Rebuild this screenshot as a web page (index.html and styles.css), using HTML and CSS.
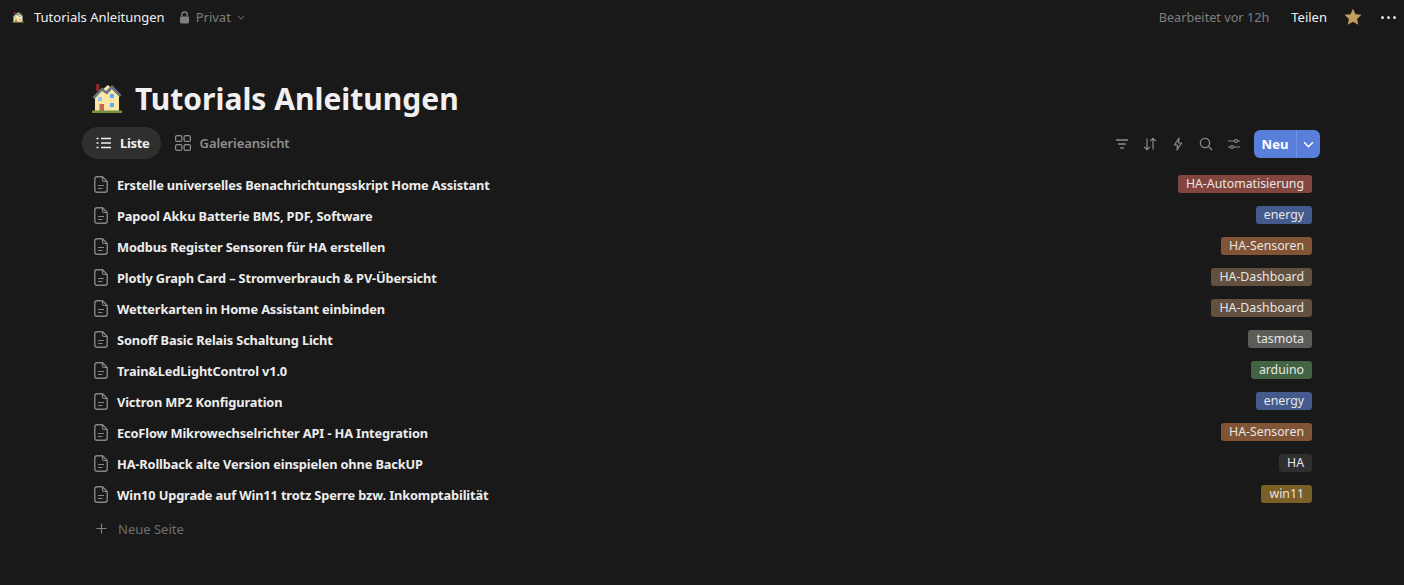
FILE: index.html
```html
<!DOCTYPE html>
<html lang="de">
<head>
  <meta charset="UTF-8">
  <meta name="viewport" content="width=device-width, initial-scale=1.0">
  <title>Tutorials Anleitungen</title>
  <link rel="stylesheet" href="styles.css">
</head>
<body>
  <svg width="0" height="0" class="defs">
    <symbol id="house" viewBox="0 0 32 32">
      <rect x="5" y="2" width="3.5" height="7" fill="#8a2a2a"/>
      <path d="M4 14 L17 3 L28 14 V29 H4 Z" fill="#fbe6a8"/>
      <path d="M1.5 15 L11 5.5 L15 9 L21 3 L30.5 13 L28.5 15 L21 7 L16 12.5 L11 9 L3.5 17 Z" fill="#66757f"/>
      <rect x="8.5" y="22" width="4.5" height="7.5" fill="#c1694f"/>
      <rect x="7" y="15" width="4" height="4" fill="#88c9f9"/>
      <rect x="19" y="12" width="4" height="4" fill="#55acee"/>
      <rect x="19" y="21" width="4" height="4" fill="#55acee"/>
      <rect x="1" y="28.5" width="30" height="2.5" fill="#77923c"/>
    </symbol>
    <symbol id="doc" viewBox="0 0 14 17">
      <path d="M3 .8h5.500L13.200 5.500V14a2.200 2.200 0 0 1-2.200 2.200H3A2.200 2.200 0 0 1 .8 14V3A2.200 2.200 0 0 1 3 .8z" fill="none" stroke="currentColor" stroke-width="1.400"/>
      <path d="M8.500 1v3A1.500 1.500 0 0 0 10 5.500h3M4 9.500h6M4 12.500h4.500" fill="none" stroke="currentColor" stroke-width="1.200"/>
    </symbol>
  </svg>

  <header class="topbar">
    <div class="crumbs">
      <svg class="crumb-emoji"><use href="#house"/></svg>
      <span class="crumb-title">Tutorials Anleitungen</span>
      <span class="privacy">
        <svg class="lock" viewBox="0 0 12 14"><path d="M3 6V4a3 3 0 0 1 6 0v2" fill="none" stroke="currentColor" stroke-width="1.600"/><rect x="1" y="6" width="10" height="7.500" rx="1.500" fill="currentColor"/></svg>
        Privat
        <svg class="chev" viewBox="0 0 10 6"><path d="M1 1l4 4 4-4" fill="none" stroke="currentColor" stroke-width="1.200"/></svg>
      </span>
    </div>
    <div class="actions">
      <span class="edited">Bearbeitet vor 12h</span>
      <span class="share">Teilen</span>
      <svg class="star" viewBox="0 0 20 20"><path d="M10 .8l2.800 6.100 6.600.7-4.900 4.500 1.400 6.600L10 15.300l-5.900 3.400 1.400-6.600L.6 7.600l6.600-.7z" fill="#c29f5a"/></svg>
      <span class="dots"><i></i><i></i><i></i></span>
    </div>
  </header>

  <main class="page">
    <h1 class="title"><svg class="title-emoji"><use href="#house"/></svg>Tutorials Anleitungen</h1>

    <div class="toolbar">
      <div class="views">
        <span class="view active">
          <svg class="view-icon" viewBox="0 0 16 12"><path d="M5 1.500h10M5 6h10M5 10.500h10" stroke="currentColor" stroke-width="1.300"/><path d="M.5 1.500h2M.5 6h2M.5 10.500h2" stroke="currentColor" stroke-width="1.500"/></svg>
          Liste
        </span>
        <span class="view">
          <svg class="view-icon" viewBox="0 0 16 16"><g fill="none" stroke="currentColor" stroke-width="1.200"><rect x=".6" y=".6" width="6.300" height="5.800" rx="1.500"/><rect x="9.100" y=".6" width="6.300" height="5.800" rx="1.500"/><rect x=".6" y="9.600" width="6.300" height="5.800" rx="1.500"/><rect x="9.100" y="9.600" width="6.300" height="5.800" rx="1.500"/></g></svg>
          Galerieansicht
        </span>
      </div>
      <div class="tools">
        <svg class="tool" viewBox="0 0 14 14"><path d="M1 3h12M3.200 7h7.600M5.200 11h3.600" stroke="currentColor" stroke-width="1.300"/></svg>
        <svg class="tool" viewBox="0 0 14 14"><path d="M4 1.500V12.500M1.200 9.800L4 12.700l2.800-2.900M10 12.500V1.500M7.200 4.200L10 1.300l2.800 2.900" fill="none" stroke="currentColor" stroke-width="1.200"/></svg>
        <svg class="tool" viewBox="0 0 14 14"><path d="M8 1L3.500 8H6.500L6 13l4.500-7H7.500z" fill="none" stroke="currentColor" stroke-width="1.200" stroke-linejoin="round"/></svg>
        <svg class="tool" viewBox="0 0 14 14"><circle cx="6" cy="6" r="4.600" fill="none" stroke="currentColor" stroke-width="1.300"/><path d="M9.400 9.400L13 13" stroke="currentColor" stroke-width="1.300"/></svg>
        <svg class="tool" viewBox="0 0 14 14"><path d="M1 4h6.500M10.500 4H13M1 10h2.500M6.500 10H13" stroke="currentColor" stroke-width="1.200"/><circle cx="9" cy="4" r="1.500" fill="none" stroke="currentColor" stroke-width="1.200"/><circle cx="5" cy="10" r="1.500" fill="none" stroke="currentColor" stroke-width="1.200"/></svg>
        <div class="new-btn">
          <span class="new-label">Neu</span>
          <span class="new-arrow"><svg viewBox="0 0 10 6"><path d="M1 1l4 4 4-4" fill="none" stroke="currentColor" stroke-width="1.400"/></svg></span>
        </div>
      </div>
    </div>

    <ul class="list">
      <li class="row"><svg class="doc"><use href="#doc"/></svg><span class="name">Erstelle universelles Benachrichtungsskript Home Assistant</span><span class="tag red">HA-Automatisierung</span></li>
      <li class="row"><svg class="doc"><use href="#doc"/></svg><span class="name">Papool Akku Batterie BMS, PDF, Software</span><span class="tag blue">energy</span></li>
      <li class="row"><svg class="doc"><use href="#doc"/></svg><span class="name">Modbus Register Sensoren für HA erstellen</span><span class="tag orange">HA-Sensoren</span></li>
      <li class="row"><svg class="doc"><use href="#doc"/></svg><span class="name">Plotly Graph Card – Stromverbrauch &amp; PV-Übersicht</span><span class="tag brown">HA-Dashboard</span></li>
      <li class="row"><svg class="doc"><use href="#doc"/></svg><span class="name">Wetterkarten in Home Assistant einbinden</span><span class="tag brown">HA-Dashboard</span></li>
      <li class="row"><svg class="doc"><use href="#doc"/></svg><span class="name">Sonoff Basic Relais Schaltung Licht</span><span class="tag gray">tasmota</span></li>
      <li class="row"><svg class="doc"><use href="#doc"/></svg><span class="name">Train&amp;LedLightControl v1.0</span><span class="tag green">arduino</span></li>
      <li class="row"><svg class="doc"><use href="#doc"/></svg><span class="name">Victron MP2 Konfiguration</span><span class="tag blue">energy</span></li>
      <li class="row"><svg class="doc"><use href="#doc"/></svg><span class="name">EcoFlow Mikrowechselrichter API - HA Integration</span><span class="tag orange">HA-Sensoren</span></li>
      <li class="row"><svg class="doc"><use href="#doc"/></svg><span class="name">HA-Rollback alte Version einspielen ohne BackUP</span><span class="tag dark">HA</span></li>
      <li class="row"><svg class="doc"><use href="#doc"/></svg><span class="name">Win10 Upgrade auf Win11 trotz Sperre bzw. Inkomptabilität</span><span class="tag yellow">win11</span></li>
    </ul>

    <div class="add-page">
      <svg class="plus" viewBox="0 0 12 12"><path d="M6 .5v11M.5 6h11" stroke="currentColor" stroke-width="1.300"/></svg>
      Neue Seite
    </div>
  </main>
</body>
</html>
```

FILE: styles.css
```css
/* General */
body {
  margin: 0;
  height: 585px;
  overflow: hidden;
  background: #191919;
  color: #e6e6e6;
  font-family: "Noto Sans", Inter, sans-serif;
  font-size: 13px;
}

.defs {
  display: block;
  height: 0;
}

/* Top bar */
.topbar {
  display: flex;
  justify-content: space-between;
  align-items: center;
  height: 34px;
  padding: 0 8px 0 12px;
}

.crumbs,
.actions,
.privacy {
  display: flex;
  align-items: center;
}

.crumb-emoji {
  width: 12px;
  height: 12px;
  margin-right: 10px;
}

.crumb-title {
  font-size: 13px;
  color: #f0f0f0;
}

.privacy {
  margin-left: 14px;
  color: #7f7f7f;
}

.lock {
  width: 11px;
  height: 13px;
  margin-right: 6px;
}

.chev {
  width: 8px;
  height: 5px;
  margin-left: 6px;
}

.edited {
  font-size: 12.700px;
  color: #7f7f7f;
}

.share {
  margin-left: 22px;
  color: #f0f0f0;
}

.star {
  width: 18px;
  height: 18px;
  margin-left: 17px;
}

.dots {
  display: flex;
  gap: 3px;
  margin-left: 19px;
}

.dots i {
  width: 3px;
  height: 3px;
  border-radius: 50%;
  background: #e0e0e0;
}

/* Page */
.page {
  padding: 0 84px 0 82px;
}

.title {
  display: flex;
  align-items: center;
  margin: 45px 0 0 9px;
  height: 38px;
  font-size: 30px;
  font-weight: 700;
  color: #f0f0f0;
}

.title-emoji {
  width: 32px;
  height: 34px;
  margin-right: 12px;
}

.toolbar {
  display: flex;
  justify-content: space-between;
  align-items: center;
  margin-top: 10px;
  height: 32px;
}

.views,
.tools,
.view {
  display: flex;
  align-items: center;
}

.view {
  height: 32px;
  padding: 0 12px 0 14px;
  border-radius: 16px;
  font-weight: 600;
  letter-spacing: -0.1px;
  color: #8f8f8f;
}

.view.active {
  padding-right: 11px;
  background: #2f2f2f;
  color: #f0f0f0;
  font-weight: 700;
  letter-spacing: -0.3px;
}

.view-icon {
  width: 16px;
  height: 16px;
  margin-right: 9px;
}

.view.active .view-icon {
  margin-right: 8px;
}

.tools {
  padding-top: 2px;
}

.tool {
  width: 14px;
  height: 14px;
  margin-right: 14px;
  color: #8c8c8c;
}

.new-btn {
  display: flex;
  height: 28px;
  margin-left: -1px;
  border-radius: 6px;
  background: #5a7fdb;
  color: #fff;
  font-weight: 700;
  overflow: hidden;
}

.new-label {
  display: flex;
  align-items: center;
  justify-content: center;
  width: 42px;
}

.new-arrow {
  display: flex;
  align-items: center;
  justify-content: center;
  width: 23px;
  border-left: 1px solid #7292e2;
}

.new-arrow svg {
  width: 11px;
  height: 7px;
}

/* List */
.list {
  list-style: none;
  margin: 10px 0 0;
  padding: 0;
}

.row {
  display: flex;
  align-items: center;
  height: 31px;
  padding: 0 8px 0 12px;
}

.doc {
  width: 14px;
  height: 17px;
  margin-right: 9px;
  color: #858585;
}

.name {
  flex: 1;
  font-size: 12.800px;
  font-weight: 700;
  letter-spacing: -0.14px;
  color: #ededed;
}

.tag {
  height: 18px;
  line-height: 18px;
  margin-bottom: 2px;
  padding: 0 8px;
  border-radius: 3px;
  font-size: 12.300px;
  color: #e6e6e6;
}

.red { background: #83463f; }
.blue { background: #455a8c; }
.orange { background: #805435; }
.brown { background: #63503e; }
.gray { background: #5c5c58; }
.green { background: #436444; }
.yellow { background: #7a5f27; }
.dark { background: #2f2f2f; }

.add-page {
  display: flex;
  align-items: center;
  height: 31px;
  margin: 3px 0 0 14px;
  color: #6f6f6f;
}

.plus {
  width: 11px;
  height: 11px;
  margin-right: 11px;
  color: #7f7f7f;
}
```
